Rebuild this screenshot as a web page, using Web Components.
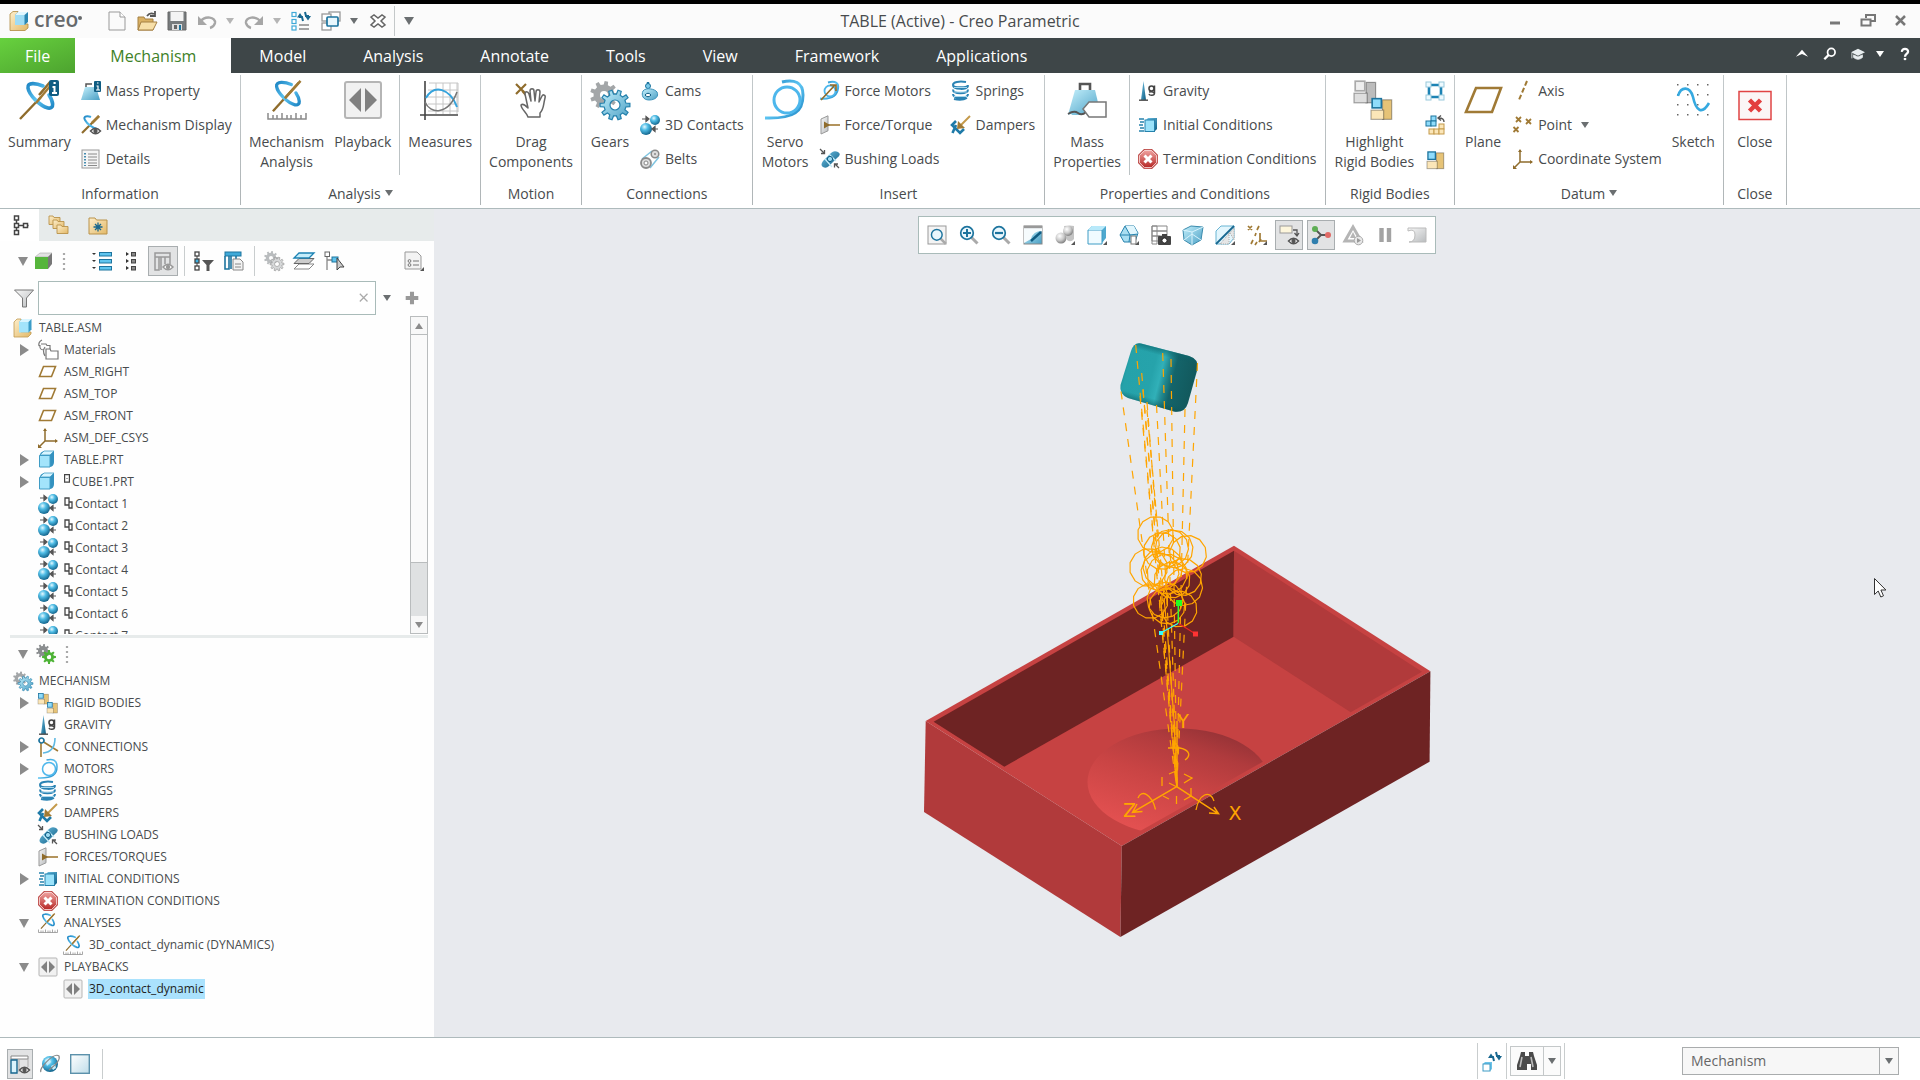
<!DOCTYPE html>
<html lang="en">
<head>
<meta charset="utf-8">
<title>TABLE (Active) - Creo Parametric</title>
<style>
html,body{height:100%;margin:0}
body{font-family:"Open Sans","Noto Sans",sans-serif;font-size:14px;line-height:20px;color:#484b4d;background:#fff;overflow:hidden}
</style>
</head>
<body>
<creo-app>
  <title-bar slot="title"></title-bar>
  <menu-bar slot="menu"></menu-bar>
  <ribbon-bar slot="ribbon">
    <ribbon-group label="Information">
      <big-button icon="summary" label="Summary"></big-button>
      <ribbon-column>
        <small-button icon="massprop" label="Mass Property"></small-button>
        <small-button icon="mechdisp" label="Mechanism Display"></small-button>
        <small-button icon="details" label="Details"></small-button>
      </ribbon-column>
    </ribbon-group>
    <ribbon-group label="Analysis" menu>
      <big-button icon="analysis" label="Mechanism|Analysis"></big-button>
      <big-button icon="playback" label="Playback"></big-button>
      <ribbon-rule></ribbon-rule>
      <big-button icon="measures" label="Measures"></big-button>
    </ribbon-group>
    <ribbon-group label="Motion">
      <big-button icon="drag" label="Drag|Components"></big-button>
    </ribbon-group>
    <ribbon-group label="Connections">
      <big-button icon="gears" label="Gears"></big-button>
      <ribbon-column>
        <small-button icon="cams" label="Cams"></small-button>
        <small-button icon="contacts" label="3D Contacts"></small-button>
        <small-button icon="belts" label="Belts"></small-button>
      </ribbon-column>
    </ribbon-group>
    <ribbon-group label="Insert" roomy>
      <big-button icon="servo" label="Servo|Motors"></big-button>
      <ribbon-column>
        <small-button icon="forcemotor" label="Force Motors"></small-button>
        <small-button icon="torque" label="Force/Torque"></small-button>
        <small-button icon="bushing" label="Bushing Loads"></small-button>
      </ribbon-column>
      <ribbon-column>
        <small-button icon="springs" label="Springs"></small-button>
        <small-button icon="dampers" label="Dampers"></small-button>
      </ribbon-column>
    </ribbon-group>
    <ribbon-group label="Properties and Conditions">
      <big-button icon="mass" label="Mass|Properties"></big-button>
      <ribbon-rule></ribbon-rule>
      <ribbon-column>
        <small-button icon="gravity" label="Gravity"></small-button>
        <small-button icon="initial" label="Initial Conditions"></small-button>
        <small-button icon="term" label="Termination Conditions"></small-button>
      </ribbon-column>
    </ribbon-group>
    <ribbon-group label="Rigid Bodies" roomy>
      <big-button icon="highlight" label="Highlight|Rigid Bodies"></big-button>
      <ribbon-column>
        <small-button icon="rb1"></small-button>
        <small-button icon="rb2"></small-button>
        <small-button icon="rb3"></small-button>
      </ribbon-column>
    </ribbon-group>
    <ribbon-group label="Datum" menu>
      <big-button icon="plane" label="Plane"></big-button>
      <ribbon-column>
        <small-button icon="axis" label="Axis"></small-button>
        <small-button icon="point" label="Point" menu></small-button>
        <small-button icon="csys" label="Coordinate System"></small-button>
      </ribbon-column>
      <big-button icon="sketch" label="Sketch"></big-button>
    </ribbon-group>
    <ribbon-group label="Close" wide>
      <big-button icon="close" label="Close"></big-button>
    </ribbon-group>
  </ribbon-bar>
  <side-panel slot="side">
    <tree-row slot="model" root icon="asm">TABLE.ASM</tree-row>
    <tree-row slot="model" icon="materials" fold="closed">Materials</tree-row>
    <tree-row slot="model" icon="planesm">ASM_RIGHT</tree-row>
    <tree-row slot="model" icon="planesm">ASM_TOP</tree-row>
    <tree-row slot="model" icon="planesm">ASM_FRONT</tree-row>
    <tree-row slot="model" icon="csys">ASM_DEF_CSYS</tree-row>
    <tree-row slot="model" icon="part" fold="closed">TABLE.PRT</tree-row>
    <tree-row slot="model" icon="part" fold="closed" mark="pack">CUBE1.PRT</tree-row>
    <tree-row slot="model" icon="contacts" mark="pair">Contact 1</tree-row>
    <tree-row slot="model" icon="contacts" mark="pair">Contact 2</tree-row>
    <tree-row slot="model" icon="contacts" mark="pair">Contact 3</tree-row>
    <tree-row slot="model" icon="contacts" mark="pair">Contact 4</tree-row>
    <tree-row slot="model" icon="contacts" mark="pair">Contact 5</tree-row>
    <tree-row slot="model" icon="contacts" mark="pair">Contact 6</tree-row>
    <tree-row slot="model" icon="contacts" mark="pair">Contact 7</tree-row>
    <tree-row slot="mech" root icon="gears">MECHANISM</tree-row>
    <tree-row slot="mech" icon="rigid" fold="closed">RIGID BODIES</tree-row>
    <tree-row slot="mech" icon="gravity">GRAVITY</tree-row>
    <tree-row slot="mech" icon="conn" fold="closed">CONNECTIONS</tree-row>
    <tree-row slot="mech" icon="servo" fold="closed">MOTORS</tree-row>
    <tree-row slot="mech" icon="springs">SPRINGS</tree-row>
    <tree-row slot="mech" icon="dampers">DAMPERS</tree-row>
    <tree-row slot="mech" icon="bushing">BUSHING LOADS</tree-row>
    <tree-row slot="mech" icon="torque">FORCES/TORQUES</tree-row>
    <tree-row slot="mech" icon="initial" fold="closed">INITIAL CONDITIONS</tree-row>
    <tree-row slot="mech" icon="term">TERMINATION CONDITIONS</tree-row>
    <tree-row slot="mech" icon="analysis" fold="open">ANALYSES</tree-row>
    <tree-row slot="mech" icon="analysis" deep>3D_contact_dynamic (DYNAMICS)</tree-row>
    <tree-row slot="mech" icon="playback" fold="open">PLAYBACKS</tree-row>
    <tree-row slot="mech" icon="playback" deep selected>3D_contact_dynamic</tree-row>
  </side-panel>
  <graphics-view slot="view"></graphics-view>
  <status-bar slot="status"></status-bar>
</creo-app>

<script>
const gear=(cx,cy,ro,ri,n,hole)=>{
  let d='';
  for(let i=0;i<n;i++){
    const a=i/n*2*Math.PI,w=Math.PI/n;
    [[ri,-.58],[ro,-.36],[ro,.36],[ri,.58]].forEach(([r,k],j)=>{
      d+=(i||j?'L':'M')+(cx+r*Math.cos(a+k*w)).toFixed(2)+' '+(cy+r*Math.sin(a+k*w)).toFixed(2);
    });
  }
  return d+'Z'+(hole?`M${cx+hole} ${cy}A${hole} ${hole} 0 1 0 ${cx-hole} ${cy}A${hole} ${hole} 0 1 0 ${cx+hole} ${cy}Z`:'');
};
const DEFS=`<defs>
<linearGradient id="b" x1="0" y1="0" x2="1" y2="1"><stop offset="0" stop-color="#c4f0fc"/><stop offset="1" stop-color="#4a9fc4"/></linearGradient>
<linearGradient id="s" x1="0" y1="0" x2="1" y2="1"><stop offset="0" stop-color="#1e86c4"/><stop offset=".5" stop-color="#5cc4f2"/><stop offset="1" stop-color="#1e86c4"/></linearGradient>
<linearGradient id="k" x1="0" y1="0" x2="1" y2="1"><stop offset="0" stop-color="#6fc3e6"/><stop offset="1" stop-color="#0d5a80"/></linearGradient>
<linearGradient id="g" x1="0" y1="0" x2="1" y2="1"><stop offset="0" stop-color="#f8f8f8"/><stop offset="1" stop-color="#b9bcbe"/></linearGradient>
<linearGradient id="t" x1="0" y1="0" x2="1" y2="1"><stop offset="0" stop-color="#fdeecb"/><stop offset="1" stop-color="#e3b968"/></linearGradient>
<radialGradient id="o" cx=".38" cy=".32" r=".7"><stop offset="0" stop-color="#e6f9ff"/><stop offset=".4" stop-color="#4fbde6"/><stop offset="1" stop-color="#12638b"/></radialGradient>
<radialGradient id="w" cx=".38" cy=".32" r=".8"><stop offset="0" stop-color="#fff"/><stop offset=".5" stop-color="#c8c8c8"/><stop offset="1" stop-color="#666"/></radialGradient>
<linearGradient id="r" x1="0" y1="0" x2="0" y2="1"><stop offset="0" stop-color="#f0a3a0"/><stop offset="1" stop-color="#b62826"/></linearGradient>
</defs>`;
const orbit=`<path d="M1 39 22 17M20 15 31 2l-9 11z" stroke="#8f6c2c" stroke-width="2.4" fill="none"/><path d="M24 6C17 3 8 2 9 8c1 7 12 18 20 20 7 1 5-7 1-13" stroke="url(#s)" stroke-width="3.6" fill="none" stroke-linecap="round"/><path d="M17 23 32 5" stroke="#a07a35" stroke-width="2.4"/>`;
const sphere=(x,y,r,f='o')=>`<circle cx="${x}" cy="${y}" r="${r}" fill="url(#${f})"/>`;
const mark=`<path d="M20 16v4h-4z" fill="#555"/>`;
const eye=(x,y)=>`<path d="M${x-5} ${y}q5-5.500 10 0q-5 5.500-10 0z" fill="#fff" stroke="#555" stroke-width="1.500"/><circle cx="${x}" cy="${y}" r="2.200" fill="#555"/>`;
const lens=s=>`<path d="m12.500 12.500 6 6" stroke="#aaa" stroke-width="3"/><circle cx="8" cy="8" r="6.300" fill="#eaf7fd" stroke="#1d749e" stroke-width="1.700"/>${s}`;
const folder=(x,y)=>`<path d="M${x} ${y}h4l1 1.500h6v7H${x}z" fill="url(#t)" stroke="#b9924a" stroke-width=".900"/>`;
const boxes=(x,y,k,a,b)=>`<g transform="translate(${x} ${y}) scale(${k})"><rect x="10" y="2" width="8" height="17" fill="${b}" stroke="#00000055"/><rect x="0" y="11" width="11" height="8" fill="${a[1]}" stroke="#00000055"/><rect x="1" y="1" width="8" height="8" fill="${a[0]}" stroke="${a[2]}" stroke-width="1.400"/></g>`;
/* each entry: [viewBox size, markup] */
const ICONS={
summary:[40,orbit+`<rect x="30" y="0" width="10" height="16" rx="2" fill="#0f5c82"/><path d="M33.500 7h2v5.500M33 13h5M34.500 3h2.200" stroke="#fff" stroke-width="2" fill="none"/>`],
analysis:[40,`<g transform="translate(5 0) scale(.92)"><path d="M1 34 29 3" stroke="#8f6c2c" stroke-width="2.600"/><path d="M21 4C14 1 4 0 5 6c1 7 12 18 20 20 7 1 5-7 1-13" transform="translate(0 1)" stroke="url(#s)" stroke-width="3.600" fill="none" stroke-linecap="round"/><path d="M14 20 31 1" stroke="#a07a35" stroke-width="2.800"/></g><path d="M1 33v6h38v-6M6 35v4M10 35v4M15 33v6M20 35v4M24 35v4M29 33v6M34 35v4" stroke="#8b8b8b" stroke-width="1.500" fill="none"/>`],
playback:[40,`<rect x="2" y="2" width="36" height="36" rx="2" fill="#f1f1f1" stroke="#b5b5b5" stroke-width="2"/><path d="M18 8v24L6 20zM22 8v24l12-12z" fill="#808080"/>`],
measures:[40,`<path d="M9 3h29v29M16 3v31M23 3v31M30 3v31M37 3v31M8 10h30M8 17h30M8 24h30M8 31h30" stroke="#c6c6c6" fill="none"/><path d="M5 1v39M0 35h38" stroke="#444" stroke-width="1.600"/><path d="M6 18C14 4 30 8 37 27" stroke="#35a3dc" stroke-width="2" fill="none"/><path d="M5 22C10 34 28 36 37 12" stroke="#777" stroke-width="1.600" fill="none"/>`],
drag:[40,`<path d="m5 4 10 10M15 4 5 14" stroke="#8f6c2c" stroke-width="2.200"/><path d="m11 11 11 13" stroke="#8f6c2c" stroke-width="1.600"/><path d="M17 37c-1-4-7-8-7-12 2-2 5 1 7 3L14 14c0-3 3-3 4 0l2 7-1-10c0-3 4-3 4 0l1 10 1-9c0-3 4-3 4 0l-1 10 3-6c1-2 4-1 3 2-2 8-1 11-5 15v4z" fill="#fff" stroke="#666" stroke-width="1.500" stroke-linejoin="round"/>`],
gears:[40,`<path d="${gear(14,15,14,10.5,9,4)}" fill="#a3a6a8" fill-rule="evenodd"/><path d="${gear(25,25,15,11,10,5)}" fill="url(#b)" stroke="#2682ad" stroke-width="1.200" fill-rule="evenodd"/>`],
cams:[20,`<path d="M8 1v5" stroke="#1d749e" stroke-width="2.400"/><circle cx="8" cy="5" r="2.500" fill="#7ccbea" stroke="#1d749e"/><path d="M3 10C1 14 3 19 9 19c7 0 10-4 8-8-2-3-11-5-14-1z" fill="url(#b)" stroke="#3c93bb"/><path d="M5 14q3-3.500 6 0-3 3.500-6 0z" fill="#fff" stroke="#0f5c82"/>`],
contacts:[20,sphere(15,5,5)+sphere(6,14,6)+`<path d="M2 4h5M9 4 6 1.500v5zM18 14h-4M12 14l3-2.500v5z" stroke="#555" stroke-width="1.200" fill="#555"/>`],
belts:[20,`<path d="M2 10 12 2M10 19l9-11" stroke="#7fc4e0" stroke-width="1.500"/><circle cx="6" cy="14" r="5" fill="#ddd" stroke="#8a8a8a" stroke-width="1.800"/><circle cx="6" cy="14" r="2" fill="#fff" stroke="#888"/><circle cx="15" cy="5" r="3.800" fill="#ddd" stroke="#8a8a8a" stroke-width="1.500"/><circle cx="15" cy="5" r="1" fill="#888"/>`],
servo:[40,`<path d="M17 2c12-3 21 0 21 13C38 31 30 39 0 38" stroke="url(#s)" stroke-width="3" fill="none"/><circle cx="22" cy="20" r="13" fill="none" stroke="#4db7ec" stroke-width="3"/>`],
forcemotor:[20,`<path d="M8 1.500c8-2 11 1 10 6-1 8-7 11-18 10" stroke="url(#s)" stroke-width="2" fill="none"/><circle cx="10" cy="10" r="5.500" fill="none" stroke="#4db7ec" stroke-width="1.800"/><path d="M1 19 15 4M10 4h6v6" stroke="#8f6c2c" stroke-width="1.700" fill="none"/>`],
torque:[20,`<path d="M1 4 8 .8v15L1 19z" fill="url(#g)" stroke="#999"/><path d="M5 10h15" stroke="#a07a35" stroke-width="1.600"/><path d="M4 6.500v7l6-3.500z" fill="#8f6c2c"/>`],
bushing:[20,`<path d="m3 12 8-8q3-3 7-1t-1 6l-8 8q-3 3-6 1t0-6z" fill="url(#k)"/><path d="m5 10 7 8M9 5l7 7" stroke="#c5edfa" stroke-width="1.200"/><circle cx="10" cy="10" r="2.600" fill="#9fdcf3" stroke="#0f5c82"/><path d="m0 0 4 4M4.500 1v3.500H1M19 19l-4-4M14.500 18.500V15H18" stroke="#555" stroke-width="1.300" fill="none"/>`],
springs:[20,`<path d="M15 1C8 0 2 1 2 4s15 3 15 0M2 4c0 5 15 5 15 1M2 8.500c0 5 15 5 15 0M2 13c0 5 15 5 15 0M3 18q8 2 13-1" stroke="#2a83b4" stroke-width="2" fill="none"/><path d="M3 6.500h13M3 11h13M3 15.500h13" stroke="#a8d8ee" stroke-width="1"/>`],
dampers:[20,`<path d="m5 6-4 4 8 8 4-4M5 10l-3.500 8" stroke="#1e7aa8" stroke-width="2.600" fill="none"/><path d="M19 1 9 11" stroke="#c49a4b" stroke-width="2"/><path d="m7 6 7 7-8 1z" fill="#a07a35"/>`],
mass:[40,`<path d="M13 11V4h10v7" fill="none" stroke="#555" stroke-width="2.600"/><path d="M8 10h20l6 25H1z" fill="url(#b)"/><path d="m0 35 4-1q5 5 10 1t10-1h16v6H0z" fill="#fff"/><path d="M1 34q6-4 10-1t8-1" fill="none" stroke="#555" stroke-width="1.800"/><path d="m16 29 6-7h17v15H22z" fill="#fff" stroke="#777" stroke-width="1.500"/>`],
massprop:[20,`<path d="M5 6V3h6" fill="none" stroke="#555" stroke-width="1.500"/><path d="M4 6h11l4 13H0z" fill="url(#b)"/><rect x="13" y="0" width="7" height="11" rx="1" fill="#0f5c82"/><path d="M15.500 5H17v4M15 9h4M16 2h1.500" stroke="#fff" stroke-width="1.200" fill="none"/>`],
mechdisp:[20,`<path d="M1 18 18 1" stroke="#8f6c2c" stroke-width="2.200"/><path d="M10 2C5 0 2 2 4 5c2 4 8 8 12 9" stroke="url(#s)" stroke-width="2" fill="none"/><path d="m11 8 7-7" stroke="#a07a35" stroke-width="2.600"/>${eye(14.500,16)}`],
details:[20,`<rect x="1" y="1" width="17" height="18" fill="#f5f5f5" stroke="#999"/><path d="M7 5h9M7 8h9M7 11h9M7 14h9M7 16.500h9" stroke="#8a8a8a"/><path d="M4 4v13" stroke="#1d749e" stroke-width="1.600" stroke-dasharray="1.500 1.500"/>`],
gravity:[20,`<path d="M5.500 0 8 19H3z" fill="url(#k)"/><path d="M1 19.200h9" stroke="#555" stroke-width="1.500"/><circle cx="13.500" cy="7.500" r="2.500" fill="none" stroke="#444" stroke-width="1.600"/><path d="M16.500 4.500v7.500c0 3-5 3-5.500.800M11 11q5-1 5.500 2" stroke="#444" stroke-width="1.500" fill="none"/>`],
initial:[20,`<path d="M8 5 10 3h9v11l-3 3H8z" fill="url(#k)"/><rect x="7" y="5" width="9.500" height="11.500" fill="#9be2fa" stroke="#2682ad"/><path d="M1 4h5M2 7h4M1 10h4M2 13h4M1 16h5" stroke="#2682ad" stroke-width="1.300"/>`],
term:[20,`<path d="M6 0h8l6 6v8l-6 6H6l-6-6V6z" fill="#b73a38"/><path d="M6.500 1.300h7l5.200 5.200v7l-5.200 5.200h-7l-5.200-5.200v-7z" fill="url(#r)" stroke="#fbe3e2" stroke-width="1"/><path d="m6.500 6.500 7 7M13.500 6.500l-7 7" stroke="#fff" stroke-width="3"/>`],
highlight:[40,boxes(0,0,1.2,['#eee','#dedede','#aaa'],'#bcbcbc')+boxes(17,17.500,1.15,['#8fdcfb','#fbe6b8','#1d749e'],'#e6c377')],
rb1:[20,`<path d="M5 4h10M5 16h10M4 5v10M16 5v10" stroke="#1d83b4" stroke-width="2.600"/><g fill="#eefaff" stroke="#9ac9dc"><rect x="1" y="1" width="5" height="5"/><rect x="14" y="1" width="5" height="5"/><rect x="1" y="14" width="5" height="5"/><rect x="14" y="14" width="5" height="5"/></g>`],
rb2:[20,`<g fill="#8fdcfb" stroke="#1d749e"><rect x="6" y="1" width="5" height="5"/><rect x="1" y="6" width="5" height="5"/><rect x="6" y="6" width="5" height="5"/></g><g fill="#fbe6b8" stroke="#c49a4b"><rect x="14" y="9" width="5" height="5"/><rect x="4" y="14" width="5" height="5"/><rect x="9" y="14" width="5" height="5"/><rect x="14" y="14" width="5" height="5"/></g><path d="M19 7q0-4-5-4M16 .5 13 3l3 2.500" stroke="#555" stroke-width="1.400" fill="none"/>`],
rb3:[20,boxes(2,2,.93,['#8fdcfb','#fbe6b8','#1d749e'],'#e6c377')],
rigid:[20,boxes(0,0,.58,['#8fdcfb','#fbe6b8','#1d749e'],'#e6c377')+boxes(9,9,.58,['#8fdcfb','#fbe6b8','#1d749e'],'#e6c377')],
conn:[20,`<path d="M3 4v16M4 4l16 10" stroke="#a07a35" stroke-width="1.600"/><path d="M5 16q12-1 12-15" stroke="#5fb9e2" stroke-width="1.600" fill="none"/><circle cx="3.500" cy="3.500" r="2.500" fill="#fff" stroke="#1d749e" stroke-width="1.700"/>`],
plane:[40,`<path d="M13 8h25l-9 24H3z" fill="#fff" stroke="#a07a35" stroke-width="2.600"/>`],
planesm:[20,`<path d="M5.500 4.500h12l-4 10h-12z" fill="#fff" stroke="#a07a35" stroke-width="1.600"/>`],
axis:[20,`<path d="m14 0-8.500 20" stroke="#a07a35" stroke-width="2" stroke-dasharray="5 2.500"/>`],
point:[20,`<path d="m3 2 5 5M8 2 3 7M13 4l5 5M18 4l-5 5M.500 12l5 5M5.500 12l-5 5" stroke="#a07a35" stroke-width="1.800"/>`],
csys:[20,`<path d="M7 1v12h12M7 13l-6 6" stroke="#8f6c2c" stroke-width="1.500" fill="none"/><path d="m5 3 2-3 2 3zM17 11l3 2-3 2zM0 20v-4l4 4z" fill="#8f6c2c"/>`],
sketch:[40,`<g fill="#666">${[4,14,24,34].map(y=>[4,14,24,34].map(x=>`<rect x="${x}" y="${y}" width="1.500" height="1.500"/>`).join('')).join('')}</g><path d="M5 16c3-10 12-10 15 1 3 14 9 18 16 6" stroke="#35a9e0" stroke-width="2.600" fill="none"/>`],
close:[40,`<rect x="4" y="11.500" width="32" height="28" fill="#fbf6f6" stroke="#e04444" stroke-width="1.500"/><path d="m14.500 20 11 11M25.500 20l-11 11" stroke="#e33f3f" stroke-width="4.500"/>`],
asm:[20,`<path d="M1 4 4 1h4v13h10v2l-3 3H1z" fill="url(#t)" stroke="#c09a52" stroke-width=".800"/><path d="m6 4 3-3h9.500v10.500l-3 3z" fill="#3b9cc7"/><path d="M6 4h9.500v10.500H6z" fill="#a3e4fb"/><path d="m6 4 3-3h9.500l-3 3z" fill="#d8f5ff"/>`],
part:[20,`<path d="M1.500 6Q2 2 6 1h10v11q0 5-5 5H1.500z" fill="#3391bf"/><path d="M1.500 5.500H12V17H1.500z" fill="#a3e4fb" stroke="#3f9cc5"/><path d="m2 5 4-4h10l-4 4z" fill="#d8f5ff" stroke="#3f9cc5" stroke-width=".800"/>`],
materials:[20,`<path d="M4 0Q0 2 1 6M3 4h5l1 1.500h3V12M6 10q-5 0-4-5M7 7q-3 4 0 9" fill="none" stroke="#777" stroke-width="1.200"/><path d="M8 9h4l1 2h7v8H8z" fill="#fff" stroke="#777" stroke-width="1.200"/>`],
/* navigator */
treetab:[20,`<g fill="none" stroke="#444" stroke-width="1.500" transform="translate(3.500 0)"><path d="M3 4v13M3 10.500h12"/><g fill="#fff"><rect x="1" y="1" width="4" height="4"/><rect x="1" y="8.500" width="4" height="4"/><rect x="1" y="15.500" width="4" height="4"/><rect x="10" y="8.500" width="4" height="4"/></g></g>`],
folders:[20,folder(0,1)+folder(4,5)+folder(8,10)],
favs:[20,`<path d="M1 3h6l1.500 2H19v14H1z" fill="url(#t)" stroke="#b9924a"/><path d="M10 7.500v9M5.500 12h9M7 9l6 6M13 9l-6 6" stroke="#17678f" stroke-width="1.300"/>`],
cube:[20,`<path d="m1 6 5-4h12l-4 4z" fill="#e2e2e2" stroke="#aaa" stroke-width=".600"/><path d="m14 6 4-4v11l-4 5z" fill="#777"/><path d="M1 6h13v12H1z" fill="#56b53c"/>`],
expand:[20,`<g fill="#333"><path d="M0 2h4L2 4zM0 9h4l-2 2zM0 16h4l-2 2z"/></g><g fill="#5fc4ee" stroke="#1d749e"><rect x="7.500" y="1.500" width="12" height="3.500"/><rect x="7.500" y="8.500" width="12" height="3.500"/><rect x="7.500" y="15.500" width="12" height="3.500"/></g>`],
collapse:[20,`<g fill="#333"><path d="M4 1v4l3-2zM4 8v4l3-2zM4 15v4l3-2z"/></g><g fill="#888" stroke="#444"><rect x="9.500" y="1.500" width="4" height="3.500"/><rect x="9.500" y="8.500" width="4" height="3.500"/><rect x="9.500" y="15.500" width="4" height="3.500"/></g>`],
columns:[20,`<path d="M2 2h15v4H2zM2 6v13h4V6M8 6v13M12 6v7M17 6v7" fill="none" stroke="#999" stroke-width="1.500"/>${eye(15,16).replaceAll('#555','#999')}`],
treefilter:[20,`<path d="M3 3v14" stroke="#444"/><g fill="#fff" stroke="#444" stroke-width="1.300"><rect x="1" y="1" width="4" height="4"/><rect x="1" y="8" width="4" height="4" fill="#3fb0e0"/><rect x="1" y="15" width="4" height="4"/></g><path d="M8 9h12l-4.500 5v6h-3v-6z" fill="#555"/>`],
treecols:[20,`<rect x="1" y="1" width="16" height="4" fill="#3fa9d8" stroke="#1d749e"/><path d="M1 5v13h4V5M7 5v13M12 5v4" fill="none" stroke="#1d749e" stroke-width="1.600"/><path d="M9 8h7l3 3v8H9z" fill="#f3f3f3" stroke="#888"/><path d="M11 13h6M11 16h6" stroke="#888"/>`],
gearsgrey:[20,`<path d="${gear(7,7,7,5.2,9,2)}" fill="#b9bcbe" fill-rule="evenodd"/><path d="${gear(13,13,7,5.2,10,2.5)}" fill="#d6d8d9" stroke="#999" stroke-width=".700" fill-rule="evenodd"/>`],
gearsgreen:[20,`<path d="${gear(7,7,7,5,9,1)}" fill="#8a8d8f" fill-rule="evenodd"/><path d="${gear(13,13,7,5,8,2.2)}" fill="#4db336" fill-rule="evenodd"/>`],
layers:[20,`<path d="m0 18 5-5h15l-5 5z" fill="#fff" stroke="#888"/><path d="m0 12.500 5-5h15l-5 5z" fill="#ccc" stroke="#666"/><path d="m0 7 5-5h15l-5 5z" fill="#c5edfb" stroke="#1d83b4" stroke-width="1.300"/>`],
treesel:[20,`<path d="M3 3v16M3 9h7" stroke="#888" stroke-width="1.300"/><rect x="1" y="1" width="4.500" height="4.500" fill="#fff" stroke="#666"/><rect x="8" y="6" width="6" height="5" fill="#5fc4ee" stroke="#1d749e"/><path d="m13 7 7 9-4 0-3 3z" fill="#ccc" stroke="#444"/>`],
settings:[20,`<path d="M1 1h12l4 4v13H1z" fill="#f3f3f3" stroke="#999"/><path d="M9 10h6M9 14h6" stroke="#777" stroke-width="1.200"/><circle cx="5.500" cy="10" r="1.400" fill="none" stroke="#777"/><circle cx="5.500" cy="14" r="1.400" fill="none" stroke="#777"/>${mark}`],
funnel:[20,`<path d="M.5 2h19l-7 8v9h-4v-9z" fill="url(#g)" stroke="#777"/>`],
plus:[20,`<path d="M10 3v14M3 10h14" stroke="#999" stroke-width="4.500"/>`],
x:[20,`<path d="m4 4 11 11M15 4 4 15" stroke="#aaa" stroke-width="1.800"/>`],
/* quick access */
new:[20,`<path d="M2 1h11l5 5v13H2z" fill="#fafafa" stroke="#999"/><path d="M13 1v5h5" fill="#fff" stroke="#999"/>`],
open:[20,`<path d="M1 6h6l1 2h8v11H1z" fill="#d9b063" stroke="#a58043"/><path d="M4 11h16l-4 8H1z" fill="#f7dfa8" stroke="#a58043"/><path d="M10 5q3-4 7-2M18 0v5h-5" fill="none" stroke="#555" stroke-width="1.800"/>`],
save:[20,`<path d="M1 1h18v18H1z" fill="#777b7d" stroke="#666"/><path d="M3.500 1h13v9h-13z" fill="#f4f4f4"/><path d="M5 13h10v6H5z" fill="#ddd"/><path d="M12 14h2v5h-2z" fill="#1d749e"/><path d="M7 18v-4h3v4" fill="#666"/>`],
undo:[20,`<path d="M3 11C8 4 19 6 18 12q-1 4-5 5" fill="none" stroke="#a6a6a6" stroke-width="2.400"/><path d="M1 5v9h9z" fill="#a6a6a6"/>`],
redo:[20,`<g transform="matrix(-1 0 0 1 20 0)"><path d="M3 11C8 4 19 6 18 12q-1 4-5 5" fill="none" stroke="#a6a6a6" stroke-width="2.400"/><path d="M1 5v9h9z" fill="#a6a6a6"/></g>`],
regen:[20,`<g fill="#fff" stroke="#3fa9d8" stroke-width="1.200"><rect x="1" y="1.500" width="4" height="4"/><rect x="1" y="8.500" width="4" height="4"/><rect x="1" y="15" width="4" height="4"/></g><path d="M8 14h10M8 18h10" stroke="#888" stroke-width="1.600"/><path d="M8 6h3l1 4M18 5h-3l-1-4" fill="none" stroke="#17678f" stroke-width="2"/><path d="M6 6.500 9 2l3 4.500zM14 5l3 4.500L20 5z" fill="#17678f"/>`],
windows:[20,`<g fill="#fff" stroke="#999" stroke-width="1.300"><rect x="8" y="1" width="11" height="9"/><rect x="1" y="3" width="9" height="7"/><rect x="1" y="12" width="9" height="7"/></g><rect x="6" y="6" width="11" height="9" rx="1" fill="#e8f7fd" stroke="#1d749e" stroke-width="1.700"/>`],
closewin:[20,`<path d="m3 6 3-2 4 3 4-3 3 2-4 4 4 4-3 2-4-3-4 3-3-2 4-4z" fill="#fff" stroke="#666" stroke-width="1.500"/>`],
dots:[20,`<path d="M10 2v2M10 7v2M10 12v2M10 17v2" stroke="#aaa" stroke-width="2.200"/>`],
min:[16,`<path d="M3 10h10" stroke="#777" stroke-width="3"/>`],
restore:[16,`<path d="M6 5V2h9v6h-4" fill="none" stroke="#777" stroke-width="2"/><rect x="1.500" y="6.500" width="9" height="6" fill="none" stroke="#777" stroke-width="2"/>`],
shut:[16,`<path d="m3 3 9 9M12 3l-9 9" stroke="#777" stroke-width="2.500"/>`],
up:[16,`<path d="m1 11 7-8 7 8-7-3z" fill="#fff"/>`],
find:[16,`<circle cx="9.500" cy="6" r="4.300" fill="none" stroke="#fff" stroke-width="2"/><path d="m6.500 9-5 5" stroke="#fff" stroke-width="2.600"/>`],
learn:[16,`<path d="m8 2 8 4-8 4-8-4z" fill="#e8eef0"/><path d="M3 9v3q5 4 10 0V9l-5 2.500zM1 7v6" fill="#e8eef0" stroke="#e8eef0"/>`],
help:[16,`<path d="M4.500 5.500C4 1 12 1 11.500 5.500 11 8 8 8 8 11" fill="none" stroke="#fff" stroke-width="2.600"/><path d="M6.600 12.500h2.800v2.500H6.600z" fill="#fff"/>`],
/* view toolbar */
refit:[20,`<rect x="1" y="1" width="18" height="18" fill="#f4f4f4" stroke="#999"/><g transform="translate(3 3) scale(.85)">${lens('')}</g>`],
zoomin:[20,lens('<path d="M8 4v8M4 8h8" stroke="#1d749e" stroke-width="2"/>')],
zoomout:[20,lens('<path d="M4 8h8" stroke="#1d749e" stroke-width="2.200"/>')],
repaint:[20,`<rect x="1" y="1" width="18" height="18" fill="url(#b)" stroke="#888"/><path d="M1 3h18v3Q10 6 8 14l-7 4z" fill="#f6fbfd"/><path d="m8 16 10-9" stroke="#0f5c82" stroke-width="2.400"/><path d="M1 2h18" stroke="#999" stroke-width="2.400"/>`],
shade:[20,`<path d="M9 1q6-1 10 0v13q-3 4-7 1z" fill="#c4c4c4"/>`+sphere(13,6,5,'w')+sphere(6,13,5.500,'w')+mark],
orient:[20,`<path d="m1 5 4-4h14v12l-4 5H1z" fill="#4fa9cf"/><path d="M1 5h14v14H1z" fill="#f0fbff" stroke="#3f9cc5"/><path d="m1 5 4-4h14l-4 4z" fill="#b8e9fa"/>${mark}`],
views:[20,`<path d="m1 10 5-9h9l4 7-3 9H5z" fill="#a9def1" stroke="#2682ad"/><path d="m6 1 5 8h8l-4-8z" fill="#e0f6fd"/><path d="M1 10h10l8-1M6 1l5 9-1 7" stroke="#2682ad" fill="none"/><rect x="12" y="11" width="5" height="8" fill="#fff" stroke="#777"/>${mark}`],
capture:[20,`<path d="M1 1h15v5H1zM1 6h15v5H1zM1 11h8v5H1zM6 1v18H1V1z" fill="#fff" stroke="#888"/><rect x="7" y="11" width="13" height="9" rx="1" fill="#444"/><path d="M11 9h5v3h-5z" fill="#444"/><circle cx="13.500" cy="15.500" r="2.600" fill="#fff" stroke="#222"/>`],
perspective:[20,`<path d="m0 5 8-4 12 1-2 13-9 5-8-5z" fill="url(#b)" stroke="#3b8bad"/><path d="m0 5 9 2v13M9 7l11-5M1 15l8-6 9 6" fill="none" stroke="#d9f4fd"/>`],
section:[20,`<path d="m1 6 5-5h13v12l-5 6H1z" fill="#e3f6fd" stroke="#6ab5d3"/><path d="M14 6v13H5L19 3v12z" fill="#e6e6e6" stroke="#aaa" stroke-dasharray="1 1"/><path d="M1 19 19 1" stroke="#17678f" stroke-width="1.800"/>${mark}`],
datums:[20,`<path d="m1 1 4 4M5 1 1 5M12 1l-2 4M4 19l2-4M8 11l1-3M12 17l2-3M10 17l-2 3M13 8v8h7" stroke="#a07a35" stroke-width="1.700" fill="none"/>${mark}`],
annot:[20,`<rect x="1" y="1" width="12" height="7" fill="#fdf6dc" stroke="#999"/><path d="M14 5h4v5M15.500 8l2.500 3 2-3" fill="none" stroke="#555" stroke-width="1.300"/>${eye(14.500,16)}`],
spin:[20,`<path d="M4 4l6 6 7 0M10 10l-6 6" stroke="#555" stroke-width="1.800" fill="none"/><circle cx="4" cy="4" r="3" fill="#5fae55"/><circle cx="17" cy="10" r="3" fill="#e06a66"/><circle cx="4" cy="16" r="3.300" fill="#2f7fae"/>`],
simulate:[20,`<path d="m10 2 8 14H2z" fill="none" stroke="#b5b5b5" stroke-width="3"/><path d="M7 13h6l-3-6z" fill="#b5b5b5"/><circle cx="15.500" cy="15.500" r="4.300" fill="#e8e8e8" stroke="#aaa"/><path d="m14 13 4 2.500-4 2.500z" fill="#999"/>`],
pause:[20,`<path d="M6.500 3v14M14 3v14" stroke="#a3a3a3" stroke-width="4.400"/>`],
clip:[20,`<path d="M1 3h18v14H2q6 0 6-7T1 6z" fill="url(#g)" stroke="#bbb"/>`],
/* status */
navtoggle:[20,`<path d="M1 2h17v3H1z" fill="#fff" stroke="#888"/><path d="M1 6h6v13H1z" fill="#d9f3fc" stroke="#17678f" stroke-width="1.400"/><path d="M9 6v12M18 5v8" stroke="#aaa"/>${eye(14.500,16)}`],
globe:[20,sphere(10,10,8)+`<path d="m5 6 4-2 2 4-4 4zM11 12l4-2 1 4-3 2z" fill="#c9eefb"/><path d="M1 18C-2 15 14-2 19 2q2 5-10 14" fill="none" stroke="#888" stroke-width="1.200"/>`],
blank:[20,`<rect x=".7" y=".7" width="18.600" height="18.600" fill="url(#pb)" stroke="#5b91ab" stroke-width="1.400"/><defs><linearGradient id="pb" x1="0" y1="0" x2="1" y2="1"><stop offset="0" stop-color="#fff"/><stop offset="1" stop-color="#bfdde9"/></linearGradient></defs>`],
regenmodel:[20,`<path d="m1 13 2-2h7v7l-2 2H1z" fill="#6cc3e8"/><rect x="1" y="13" width="7" height="7" fill="#fff" stroke="#3f9cc5"/><path d="M8 6h3l1 4M18 5h-3l-1-4" fill="none" stroke="#17678f" stroke-width="2"/><path d="M6 7 9 2.500 12 7zM14 5l3 4.500L20 5z" fill="#17678f"/>`],
binoc:[20,`<path d="M4 1h4v4h4V1h4l1 4 3 9v5h-6v-6h-4v6H0v-5l3-9z" fill="#4a4a4a"/><path d="M5 6 3 16M14 6l2 10" stroke="#bbb" stroke-width="1.600"/>`],
logo:[20,`<path d="M1 3 4 .5h5V13h10v4l-3 2.500H1z" fill="url(#t)" stroke="#b08a40" stroke-width=".800"/><path d="m6 4 3-3h10v10l-3.500 3z" fill="#2b86b2"/><path d="M6 4h9.500v10H6z" fill="#9fdcf5"/><path d="m6 4 3-3h10l-3.500 3z" fill="#e2f7ff"/>`]
};
const svg=n=>{const[s,m]=ICONS[n];return `<svg viewBox="0 0 ${s} ${s}" aria-hidden="true">${DEFS}${m}</svg>`};

const BASE=`*,:host{box-sizing:border-box}svg{display:block;width:100%;height:100%;overflow:visible}
button{font:inherit;color:inherit;background:none;border:0;margin:0;padding:0;cursor:default;display:flex;align-items:center}`;
const define=(tag,render,css)=>customElements.define(tag,class extends HTMLElement{
  connectedCallback(){
    if(this.shadowRoot)return;
    const t=document.createElement('template');
    t.innerHTML=`<style>${BASE}${css}</style>${render(this)}`;
    this.attachShadow({mode:'open'}).append(t.content.cloneNode(true));
  }
});
const A=(el,n)=>el.getAttribute(n)||'';

define('creo-icon',el=>svg(A(el,'name')),`:host{display:block;flex:none;width:var(--icon,20px);height:var(--icon,20px)}`);
define('drop-arrow',()=>``,`:host{display:block;flex:none;width:0;height:0;box-sizing:content-box;border:solid transparent;border-width:6px 4px 0;border-top-color:var(--arrow,#6b6f71)}`);

define('creo-app',()=>`<slot name="title"></slot><slot name="menu"></slot><slot name="ribbon"></slot><main><slot name="side"></slot><slot name="view"></slot></main><slot name="status"></slot>`,
`:host{display:flex;flex-direction:column;height:100vh;border-top:4px solid #000}main{flex:1;min-height:0;display:flex;background:#e8eaee}`);

define('title-bar',()=>{
  const q=n=>`<button aria-label="${n}"><creo-icon name="${n}"></creo-icon></button>`;
  return `<div class="quick"><span class="logo"><creo-icon name="logo"></creo-icon><b>creo</b><i></i></span>
  ${q('new')}${q('open')}${q('save')}
  <span class="pair">${q('undo')}<drop-arrow class="pale"></drop-arrow></span>
  <span class="pair">${q('redo')}<drop-arrow class="pale"></drop-arrow></span>
  ${q('regen')}<span class="pair">${q('windows')}<drop-arrow></drop-arrow></span>${q('closewin')}
  <span class="more"><drop-arrow></drop-arrow></span></div>
  <h1>TABLE (Active) - Creo Parametric</h1>
  <div class="win">${q('min')}${q('restore')}${q('shut')}</div>`},
`:host{display:grid;grid-template-columns:1fr auto 1fr;align-items:center;height:34px;background:#fbfbfb;flex:none}
.quick{display:flex;align-items:center;gap:10px;padding-left:9px}
.logo{display:flex;align-items:center;margin-right:15px}b{font:600 21px/24px "Open Sans",sans-serif;color:#66696b;padding-left:5px;margin-top:-4px}
i{width:4px;height:4px;border-radius:50%;background:#66696b;margin:0 0 6px 0}
.pair{display:flex;align-items:center;gap:9px}.pale{--arrow:#b5b5b5}
.more{border-left:1px solid #c4c8c9;height:30px;display:flex;align-items:center;padding-left:9px;margin-left:-4px}.more drop-arrow{border-width:8px 5px 0}
h1{font-size:16px;line-height:24px;font-weight:400;margin:0}
.win{display:flex;justify-content:flex-end;gap:17px;padding-right:11px;--icon:16px}`);

define('menu-bar',()=>`<nav role="tablist"><button class="file">File</button><button class="on" role="tab" aria-selected="true">Mechanism</button>${['Model','Analysis','Annotate','Tools','View','Framework','Applications'].map(t=>`<button role="tab">${t}</button>`).join('')}</nav>
<div><creo-icon name="up"></creo-icon><creo-icon name="find"></creo-icon><span><creo-icon name="learn"></creo-icon><drop-arrow></drop-arrow></span><creo-icon name="help"></creo-icon></div>`,
`:host{display:flex;justify-content:space-between;height:35px;background:#3e4648;color:#fff;flex:none;font-size:16px;line-height:24px}
nav{display:flex}nav button{padding:0 29px 0 28px}nav .file{padding:0 25px;background:linear-gradient(160deg,#67d13e,#4da32f)}nav .on{padding:0 35px;background:#fff;color:#3e8128}
div,span{display:flex;align-items:center;gap:11px}div{gap:14px;padding:0 8px 4px 0;--icon:14px;--arrow:#fff}`);

define('ribbon-bar',()=>`<slot></slot>`,`:host{display:flex;height:136px;flex:none;background:#fff;border-bottom:1px solid #aebabc}`);
define('ribbon-group',el=>`<div><slot></slot></div><footer>${A(el,'label')}${el.hasAttribute('menu')?'<drop-arrow></drop-arrow>':''}</footer>`,
`:host{display:flex;flex-direction:column;flex:none;margin:0 0 3px;border-right:1px solid;border-image:linear-gradient(#fff 3px,#c3c9cb 3px,#aeb4b6) 1}
div{display:flex;gap:10px;padding:0 8px;height:102px}:host([wide]) div{padding:0 11px}:host([roomy]) div{gap:11px;padding:0 9px}
footer{display:flex;justify-content:center;align-items:center;gap:4px;padding-top:9px}drop-arrow{margin-bottom:3px}`);
define('ribbon-rule',()=>``,`:host{display:block;width:1px;margin:2px -2px 0;background:#bcc3c5}`);
define('ribbon-column',()=>`<slot></slot>`,`:host{display:flex;flex-direction:column;padding-top:1px}`);
define('big-button',el=>`<button><creo-icon name="${A(el,'icon')}"></creo-icon><span>${A(el,'label').split('|').map(t=>`<span>${t}</span>`).join('')}</span></button>`,
`:host{display:block;--icon:40px}button{flex-direction:column;gap:12px;padding-top:7px;text-align:center}span span{display:block}`);
define('small-button',el=>`<button aria-label="${A(el,'label')||A(el,'icon')}"><creo-icon name="${A(el,'icon')}"></creo-icon>${A(el,'label')?`<span>${A(el,'label')}</span>`:''}${el.hasAttribute('menu')?'<drop-arrow></drop-arrow>':''}</button>`,
`:host{display:block}button{height:34px;gap:5px}span{white-space:nowrap}drop-arrow{margin-left:4px}`);

define('tree-row',el=>`<span class="fold ${A(el,'fold')}"></span><creo-icon name="${A(el,'icon')}"></creo-icon>${
 el.getAttribute('mark')==='pair'?'<svg viewBox="0 0 9 12"><path d="M1 1h4v7H1zM5 5h3v6H5z" fill="none" stroke="#444" stroke-width="1.300"/></svg>':
 el.getAttribute('mark')==='pack'?'<svg class="pk" viewBox="0 0 6 9"><path d="M.6.6h4.800v7.500H.6zM2.500 4.500h1" fill="none" stroke="#444" stroke-width="1.200"/></svg>':''}<span class="t"><slot></slot></span>`,
`:host{display:flex;align-items:center;height:22px;padding-left:20px;flex:none;white-space:nowrap;font-size:12px;line-height:20px}
.fold{width:9px;margin-right:9px;border:solid transparent;border-width:0;height:0}
.closed{border-width:6px 0 6px 9px;border-left-color:#8b8b8b}.closed,.open{width:0}.open{border-width:9px 5px 0 5px;border-top-color:#8b8b8b;margin:0 9px 0 -1px}
:host([root]){padding-left:13px}:host([root]) .fold{display:none}:host([deep]){padding-left:45px}
.t{margin-left:5px;padding:0 1px}svg{flex:none;width:9px;height:12px;margin:0 -4px 3px 6px}svg.pk{width:6px;height:9px;margin-bottom:7px;margin-right:-4px}
:host([selected]) .t{background:#aae2fd;color:#222}`);

define('tool-button',el=>`<button aria-label="${A(el,'icon')}"><creo-icon name="${A(el,'icon')}"></creo-icon></button>`,
`:host{display:block;flex:none}button{width:var(--tool,28px);height:var(--toolh,30px);justify-content:center;border:1px solid transparent}:host([on]) button{background:#e2e3e4;border-color:#a9aeb0}`);

define('side-panel',()=>{
 const b=(n,o='')=>`<tool-button icon="${n}" ${o}></tool-button>`;
 return `<div class="tabs"><button class="on" aria-label="Model tree"><creo-icon name="treetab"></creo-icon></button><button aria-label="Folders"><creo-icon name="folders"></creo-icon></button><button aria-label="Favorites"><creo-icon name="favs"></creo-icon></button></div>
 <div class="bar"><drop-arrow></drop-arrow>${b('cube')}${b('dots')}<s></s>${b('expand')}${b('collapse')}${b('columns','on')}<hr>${b('treefilter')}${b('treecols')}<hr>${b('gearsgrey')}${b('layers')}${b('treesel')}<em></em>${b('settings')}</div>
 <div class="search"><creo-icon name="funnel"></creo-icon><label><input aria-label="Filter"><creo-icon name="x"></creo-icon></label><drop-arrow></drop-arrow><creo-icon name="plus"></creo-icon></div>
 <section class="model"><div class="list"><slot name="model"></slot></div><div class="scroll"><i><drop-arrow></drop-arrow></i><u></u><i><drop-arrow></drop-arrow></i></div></section>
 <div class="split"></div>
 <div class="bar two"><drop-arrow></drop-arrow>${b('gearsgreen')}${b('dots')}</div>
 <div class="list"><slot name="mech"></slot></div>`},
`:host{display:flex;flex-direction:column;width:434px;flex:none;background:#fefefe}
.tabs{display:flex;height:32px;background:#e7ebeb}.tabs button{width:39px;justify-content:center}.on{background:#fff}
.bar{display:flex;align-items:center;height:40px;padding:0 6px 0 18px;gap:2px;--tool:28px}
.bar>drop-arrow,.scroll drop-arrow{--arrow:#8b8b8b}.bar>drop-arrow{border-width:9px 5px 0}
.bar tool-button:nth-child(3){--tool:8px}s{width:16px}em{flex:1}
hr{width:1px;height:30px;border:0;background:#c9cdce;margin:0 3px 0 4px}.bar tool-button[on]{--tool:30px}
.search{display:flex;align-items:center;height:34px;padding:0 13px 0 14px}
label{flex:1;display:flex;align-items:center;margin:0 7px 0 4px;border:1px solid #a9bbb9;height:34px;background:#fff;padding-right:4px;--icon:14px}
input{flex:1;min-width:0;border:0;outline:0;background:none;font:inherit}.search>drop-arrow{margin-right:12px}.search>creo-icon:last-child{--icon:18px}
.model{display:flex;height:319px;padding-top:1px;overflow:hidden;flex:none;margin-right:6px}.model .list{flex:1;padding-top:1px}
.list{overflow:hidden}
.scroll{width:18px;display:flex;flex-direction:column;background:#dfe1e2;border:1px solid #b9bcbd}
.scroll i{height:17px;display:flex;align-items:center;justify-content:center;background:#f8f8f8}.scroll u{height:229px;border:solid #b9bcbd;border-width:1px 0;background:#fafafa}
.scroll i:first-child drop-arrow{transform:rotate(180deg)}.scroll i:last-child{margin-top:auto}
.split{height:3px;background:#e7ebeb;margin:1px 6px 0 10px;flex:none}.two{height:32px}.two tool-button:nth-child(2){--tool:31px}`);

const TAU=Math.PI*2,ORG=[1176.7,786.7];
const poly=(x,y,r,k)=>`<polygon points="${Array.from({length:12},(_,i)=>[(x+r*Math.cos((i+k)/12*TAU)).toFixed(1),(y+r*Math.sin((i+k)/12*TAU)).toFixed(1)]).join(' ')}"/>`;
const rings=[[1155.5,534.5,18,.5],[1170,548,18.5,.1],[1162,551,18.5,.6],[1188,554,18.5,.3],[1148.500,567.500,19,.5],[1174,549,19,.8],[1160,572,19,.2],[1167,574,20,.4],[1183,577,18.5,.7],[1184,587,18.5,.1],[1150.500,601,17.500,.5],[1165,600,18,.2],[1167,606,18,.7],[1179,609,18,.4],[1163,567,20,.9],[1172,580,18,.6]];
const tops=[[1135.700,345],[1121,391.500],[1162.700,353],[1171,359],[1197.500,363],[1185,409],[1156.500,405],[1147,402],[1143,390],[1141.700,373],[1140,396]];
const CUBE='M1141 343.500 1189 356Q1199 359 1197.500 369L1188 403Q1185 413 1174 411.500L1128 398Q1119 394 1120.500 385L1131 351Q1134 342 1141 343.500z';

define('graphics-view',()=>{
 const b=(n,o='')=>`<tool-button icon="${n}" ${o}></tool-button>`;
 return `<svg viewBox="434 209 1486 828" preserveAspectRatio="xMidYMid slice" role="img" aria-label="Box with cube">
<defs>
<linearGradient id="bowl" x1=".25" y1="1" x2=".8" y2=".05"><stop offset="0" stop-color="#e65252"/><stop offset=".5" stop-color="#c94444"/><stop offset=".8" stop-color="#b03b3d"/><stop offset="1" stop-color="#943236"/></linearGradient>
<linearGradient id="cl" gradientUnits="userSpaceOnUse" x1="1121" y1="370" x2="1196" y2="389"><stop offset="0" stop-color="#1b8f96"/><stop offset=".08" stop-color="#25a2aa"/><stop offset=".4" stop-color="#26a3ab"/><stop offset=".51" stop-color="#31b0b8"/><stop offset=".59" stop-color="#21888f"/><stop offset=".68" stop-color="#14646a"/><stop offset=".94" stop-color="#12595d"/><stop offset="1" stop-color="#177e84"/></linearGradient>
<linearGradient id="cs" gradientUnits="userSpaceOnUse" x1="1169" y1="349" x2="1153" y2="408"><stop offset="0" stop-color="#0d6a70" stop-opacity=".8"/><stop offset=".14" stop-color="#0d5c62" stop-opacity="0"/><stop offset=".85" stop-color="#0d5c62" stop-opacity="0"/><stop offset="1" stop-color="#0a4b50" stop-opacity=".7"/></linearGradient>
<clipPath id="floor"><path d="M1004.300 766.700 1233.600 636.700 1350.700 712.300 1121.500 841.400z"/></clipPath></defs>
<path fill="#c64242" d="M1234 545.700 1430.400 671.300 1121.800 846 925.700 721z"/>
<path fill="#6e2323" d="M933.600 721.700 1234 550.700 1233.600 636.700 1004.300 766.700z"/>
<path fill="#b13a3b" d="M1234 550.700 1422 671.700 1350.700 712.300 1233.600 636.700z"/>
<path fill="#b13a3b" d="M925.700 721 1121.800 846 1120.400 937 924 812z"/>
<path fill="#6e2323" d="M1121.800 846 1430.400 671.300 1429.600 761.700 1120.400 937z"/>
<g clip-path="url(#floor)"><ellipse cx="1178.500" cy="782" rx="91" ry="53.500" fill="url(#bowl)"/></g>
<path fill="url(#cl)" d="${CUBE}"/><path fill="url(#cs)" d="${CUBE}"/>
<g fill="none" stroke="#ffa500" stroke-width="1.200">
<g stroke-dasharray="8 8">${tops.map(([x,y])=>`<path d="M${x} ${y} ${ORG}"/>`).join('')}</g>
<path d="M1164 598 1168 640 1174 720 1176.700 786.700"/><path stroke-dasharray="7 3" d="M1147 410 1164 598"/>
${rings.map(r=>poly(...r)).join('')}
<path stroke-width="1.500" d="M1176.700 786.700 1218 813.700M1209 813l9.500.7-4.500-6.700M1176.700 786.700 1132.500 812.300M1137 804l-4.500 8.300 10-.8M1177 787v-66"/>
<path stroke-width="1.300" d="M1138 798c3-9 14-4 17.500 11.500M1196 810c3-16 14-21 18-9M1168 748h12c10 2 11 8 5 12M1162 777v9M1176.500 796v8M1191 788v8l-7 4M1184 774l8 4-8 5M1169 774l7-3M1169 783l8 4M1163 796l6 3"/></g>
<g fill="#ffa500" font-size="19" font-family="DejaVu Sans" text-anchor="middle"><text x="1235" y="820">X</text><text x="1129.500" y="817">Z</text><text x="1183" y="728">Y</text></g>
<path d="M1178.300 623.300V603" stroke="#3f3" stroke-width="1.500"/><path d="M1178.300 623.300 1160.700 633" stroke="#3ff" stroke-width="1.300"/><path d="M1178.300 623.300 1195.300 633.700" stroke="#e22" stroke-width="1.200"/>
<path fill="#2f2" d="M1176 600h6v6h-6z"/><path fill="#3ff" d="M1159 631h4v4h-4z"/><path fill="#f33" d="M1193 631.500h5v5h-5z"/>
<path d="M1874.500 578.500v16l3.700-3.500 2.600 6 2.700-1.200-2.600-5.800h5z" fill="#fff" stroke="#333"/>
</svg>
<div role="toolbar">${b('refit')}${b('zoomin')}${b('zoomout')}${b('repaint')}${b('shade')}${b('orient')}${b('views')}${b('capture')}${b('perspective')}${b('section')}${b('datums')}${b('annot','on')}${b('spin','on')}${b('simulate')}${b('pause')}${b('clip')}</div>`},
`:host{display:block;position:relative;flex:1;min-width:0;overflow:hidden;background:#e8eaee}
div{position:absolute;top:7px;left:0;right:0;width:max-content;margin:0 auto;display:flex;gap:4px;padding:3px 4px;background:#fff;border:1px solid #a9bbb9}`);

define('status-bar',()=>`<div><tool-button icon="navtoggle" on></tool-button><creo-icon name="globe"></creo-icon><creo-icon name="blank"></creo-icon><hr></div>
<div class="r"><hr><creo-icon name="regenmodel"></creo-icon><hr><span class="find"><button aria-label="Find"><creo-icon name="binoc"></creo-icon></button><button aria-label="Find options"><drop-arrow></drop-arrow></button></span><hr>
<label><select aria-label="Selection filter"><option>Mechanism</option></select><i><drop-arrow></drop-arrow></i></label></div>`,
`:host{display:flex;justify-content:space-between;height:43px;flex:none;background:#fff;border-top:1px solid #aebabc}
div{display:flex;align-items:center;gap:10px;padding-left:7px}tool-button{--tool:26px;margin-right:-3px}
hr{width:1px;height:36px;border:0;margin:0;background:#c9cdce}.r{gap:4px;padding:3px 21px 0 0}
div:not(.r){padding-top:9px}div:not(.r) hr{height:30px;margin:0 2px}
.find{display:flex;border:1px solid #c4c8c9;height:30px;background:#fbfbfb;margin:0 -1px}.find button{padding:0 6px;border-right:1px solid #c4c8c9}.find button+button{padding:0 4px;border:0}
label{display:flex;width:217px;height:28px;border:1px solid #a9acad;background:#f7f7f7;margin-left:113px}
select{flex:1;appearance:none;border:0;background:none;font:inherit;color:#666;padding:0 8px;outline:0}
i{width:19px;border-left:1px solid #a9acad;display:flex;align-items:center;justify-content:center}`);
</script>
</body>
</html>
